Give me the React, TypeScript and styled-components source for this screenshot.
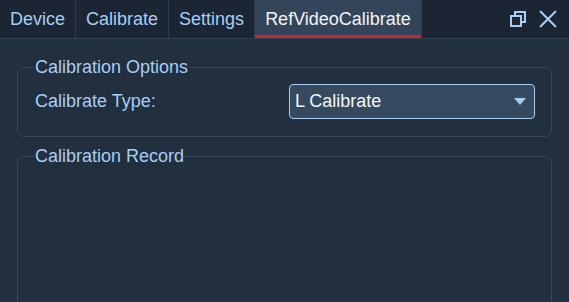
import styled, { createGlobalStyle } from "styled-components";

const GlobalStyle = createGlobalStyle`
  html, body {
    margin: 0;
    padding: 0;
    background: #212f3f;
    font-family: "Liberation Sans", Arial, sans-serif;
    overflow: hidden;
  }
`;

const Page = styled.div`
  width: 569px;
  height: 302px;
  display: flex;
  flex-direction: column;
  background: #212f3f;
  overflow: hidden;
`;

const TabBar = styled.div`
  height: 38px;
  flex-shrink: 0;
  display: flex;
  flex-direction: row;
  align-items: stretch;
  background: #1b2533;
  border-bottom: 1px solid #303f51;
`;

const Tab = styled.div<{ active?: boolean }>`
  display: flex;
  align-items: center;
  padding: 0 10px;
  font-size: 18px;
  color: ${({ active }) => (active ? "#f0f4f8" : "#a9cdf3")};
  background: ${({ active }) => (active ? "#354559" : "transparent")};
  border-right: 1px solid #2f3d4f;
  box-shadow: ${({ active }) => (active ? "inset 0 -3px 0 #c8282d" : "none")};
`;

const Spacer = styled.div`
  flex: 1;
`;

const IconButton = styled.div`
  display: flex;
  align-items: center;
  justify-content: center;
  width: 24px;
`;

const Icons = styled.div`
  display: flex;
  align-items: center;
  gap: 6px;
  padding-right: 9px;
`;

const Body = styled.div`
  flex: 1;
  padding: 18px 17px 0 17px;
  display: flex;
  flex-direction: column;
  gap: 9px;
`;

const Group = styled.fieldset<{ grow?: boolean }>`
  margin: 0;
  border: 1px solid #35475a;
  border-radius: 7px;
  padding: 0 16px 17px 17px;
  flex: ${({ grow }) => (grow ? 1 : "none")};
  min-height: ${({ grow }) => (grow ? "200px" : "0")};
`;

const Legend = styled.legend`
  color: #a9cdf3;
  font-size: 18px;
  padding: 0 1px;
  margin-left: -1px;
`;

const Row = styled.div`
  display: flex;
  align-items: center;
  justify-content: space-between;
  margin-top: 6px;
`;

const Label = styled.span`
  color: #a9cdf3;
  font-size: 18px;
`;

const Select = styled.div`
  width: 246px;
  height: 35px;
  box-sizing: border-box;
  border: 1px solid #a9cdf3;
  border-radius: 4px;
  background: #354a5f;
  display: flex;
  align-items: center;
  justify-content: space-between;
  padding: 0 8px 0 5px;
  color: #f2f6fa;
  font-size: 18px;
`;

const Arrow = styled.span`
  width: 0;
  height: 0;
  border-left: 6px solid transparent;
  border-right: 6px solid transparent;
  border-top: 7px solid #a9cdf3;
`;

export default function App() {
  return (
    <Page>
      <GlobalStyle />
      <TabBar>
        <Tab>Device</Tab>
        <Tab>Calibrate</Tab>
        <Tab>Settings</Tab>
        <Tab active>RefVideoCalibrate</Tab>
        <Spacer />
        <Icons>
          <IconButton>
            <svg width="18" height="18" viewBox="0 0 18 18" fill="none" stroke="#a9cdf3" strokeWidth="2">
              <rect x="2" y="6" width="10" height="10" />
              <path d="M6 5V2H16V12H13" />
            </svg>
          </IconButton>
          <IconButton>
            <svg width="20" height="20" viewBox="0 0 20 20" fill="none" stroke="#a9cdf3" strokeWidth="2">
              <path d="M2 2L18 18M18 2L2 18" />
            </svg>
          </IconButton>
        </Icons>
      </TabBar>
      <Body>
        <Group>
          <Legend>Calibration Options</Legend>
          <Row>
            <Label>Calibrate Type:</Label>
            <Select>
              L Calibrate
              <Arrow />
            </Select>
          </Row>
        </Group>
        <Group grow>
          <Legend>Calibration Record</Legend>
        </Group>
      </Body>
    </Page>
  );
}
